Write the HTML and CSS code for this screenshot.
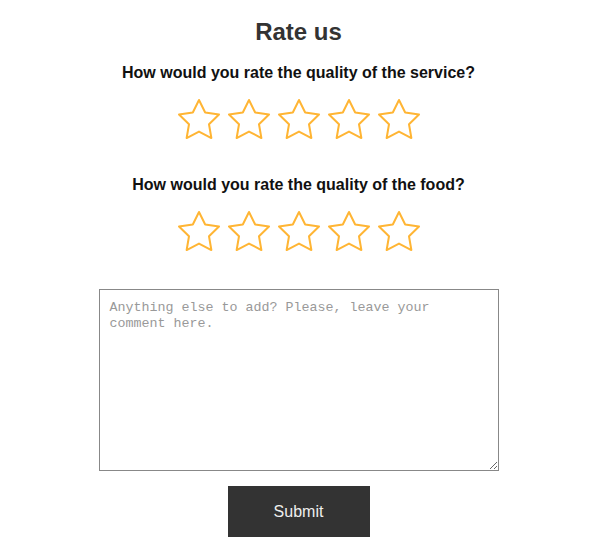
FILE: index.html
```html
<!DOCTYPE html>
<html lang="en">
  <head>
    <meta charset="UTF-8" />
    <meta name="viewport" content="width=device-width, initial-scale=1.0" />
    <title>Rate us</title>
    <link rel="stylesheet" href="styles.css">
  </head>
  <body>
    <form class="rating-form">
      <h1>Rate us</h1>

      <p class="question">How would you rate the quality of the service?</p>
      <div class="stars" data-name="service"></div>

      <p class="question">How would you rate the quality of the food?</p>
      <div class="stars" data-name="food"></div>

      <textarea class="comment" placeholder="Anything else to add? Please, leave your comment here."></textarea>

      <button type="submit" class="submit-btn">Submit</button>
    </form>

    <script>
      const starSvg = `
        <svg width="44" height="44" viewBox="1 1 22 22">
          <polygon points="12,2 15.09,8.26 22,9.27 17,14.14 18.18,21.02 12,17.77 5.82,21.02 7,14.14 2,9.27 8.91,8.26" />
        </svg>`;

      document.querySelectorAll('.stars').forEach((group) => {
        for (let i = 1; i <= 5; i++) {
          const star = document.createElement('span');
          star.className = 'star';
          star.dataset.value = i;
          star.innerHTML = starSvg;
          group.appendChild(star);
        }
      });
    </script>
  </body>
</html>
```

FILE: styles.css
```css
body {
  font-family: Arial, "Liberation Sans", sans-serif;
  margin: 0;
  padding: 0;
  background-color: #fff;
}
.rating-form {
  display: flex;
  flex-direction: column;
  align-items: center;
  padding-top: 18px;
  padding-left: 2px;
}
h1 {
  margin: 0;
  font-size: 24px;
  color: #333;
}
.question {
  margin: 18px 0 0;
  font-size: 16px;
  font-weight: bold;
  color: #111;
}
.stars {
  display: flex;
  gap: 6px;
  margin-top: 16px;
}
.stars + .question {
  margin-top: 34px;
}
.star {
  display: block;
  width: 44px;
  height: 44px;
}
.star svg {
  display: block;
  fill: none;
  stroke: #ffb534;
  stroke-width: 1;
  stroke-linejoin: round;
}
.comment {
  box-sizing: border-box;
  width: 400px;
  height: 182px;
  margin-top: 35px;
  padding: 10px;
  border: 1px solid #888;
  font-family: "Liberation Mono", monospace;
  font-size: 13.33px;
  line-height: 16px;
}
.comment::placeholder {
  color: #999;
}
.submit-btn {
  width: 142px;
  height: 51px;
  margin-top: 15px;
  border: none;
  background-color: #333;
  color: #eee;
  font-family: Arial, "Liberation Sans", sans-serif;
  font-size: 16px;
}
```
